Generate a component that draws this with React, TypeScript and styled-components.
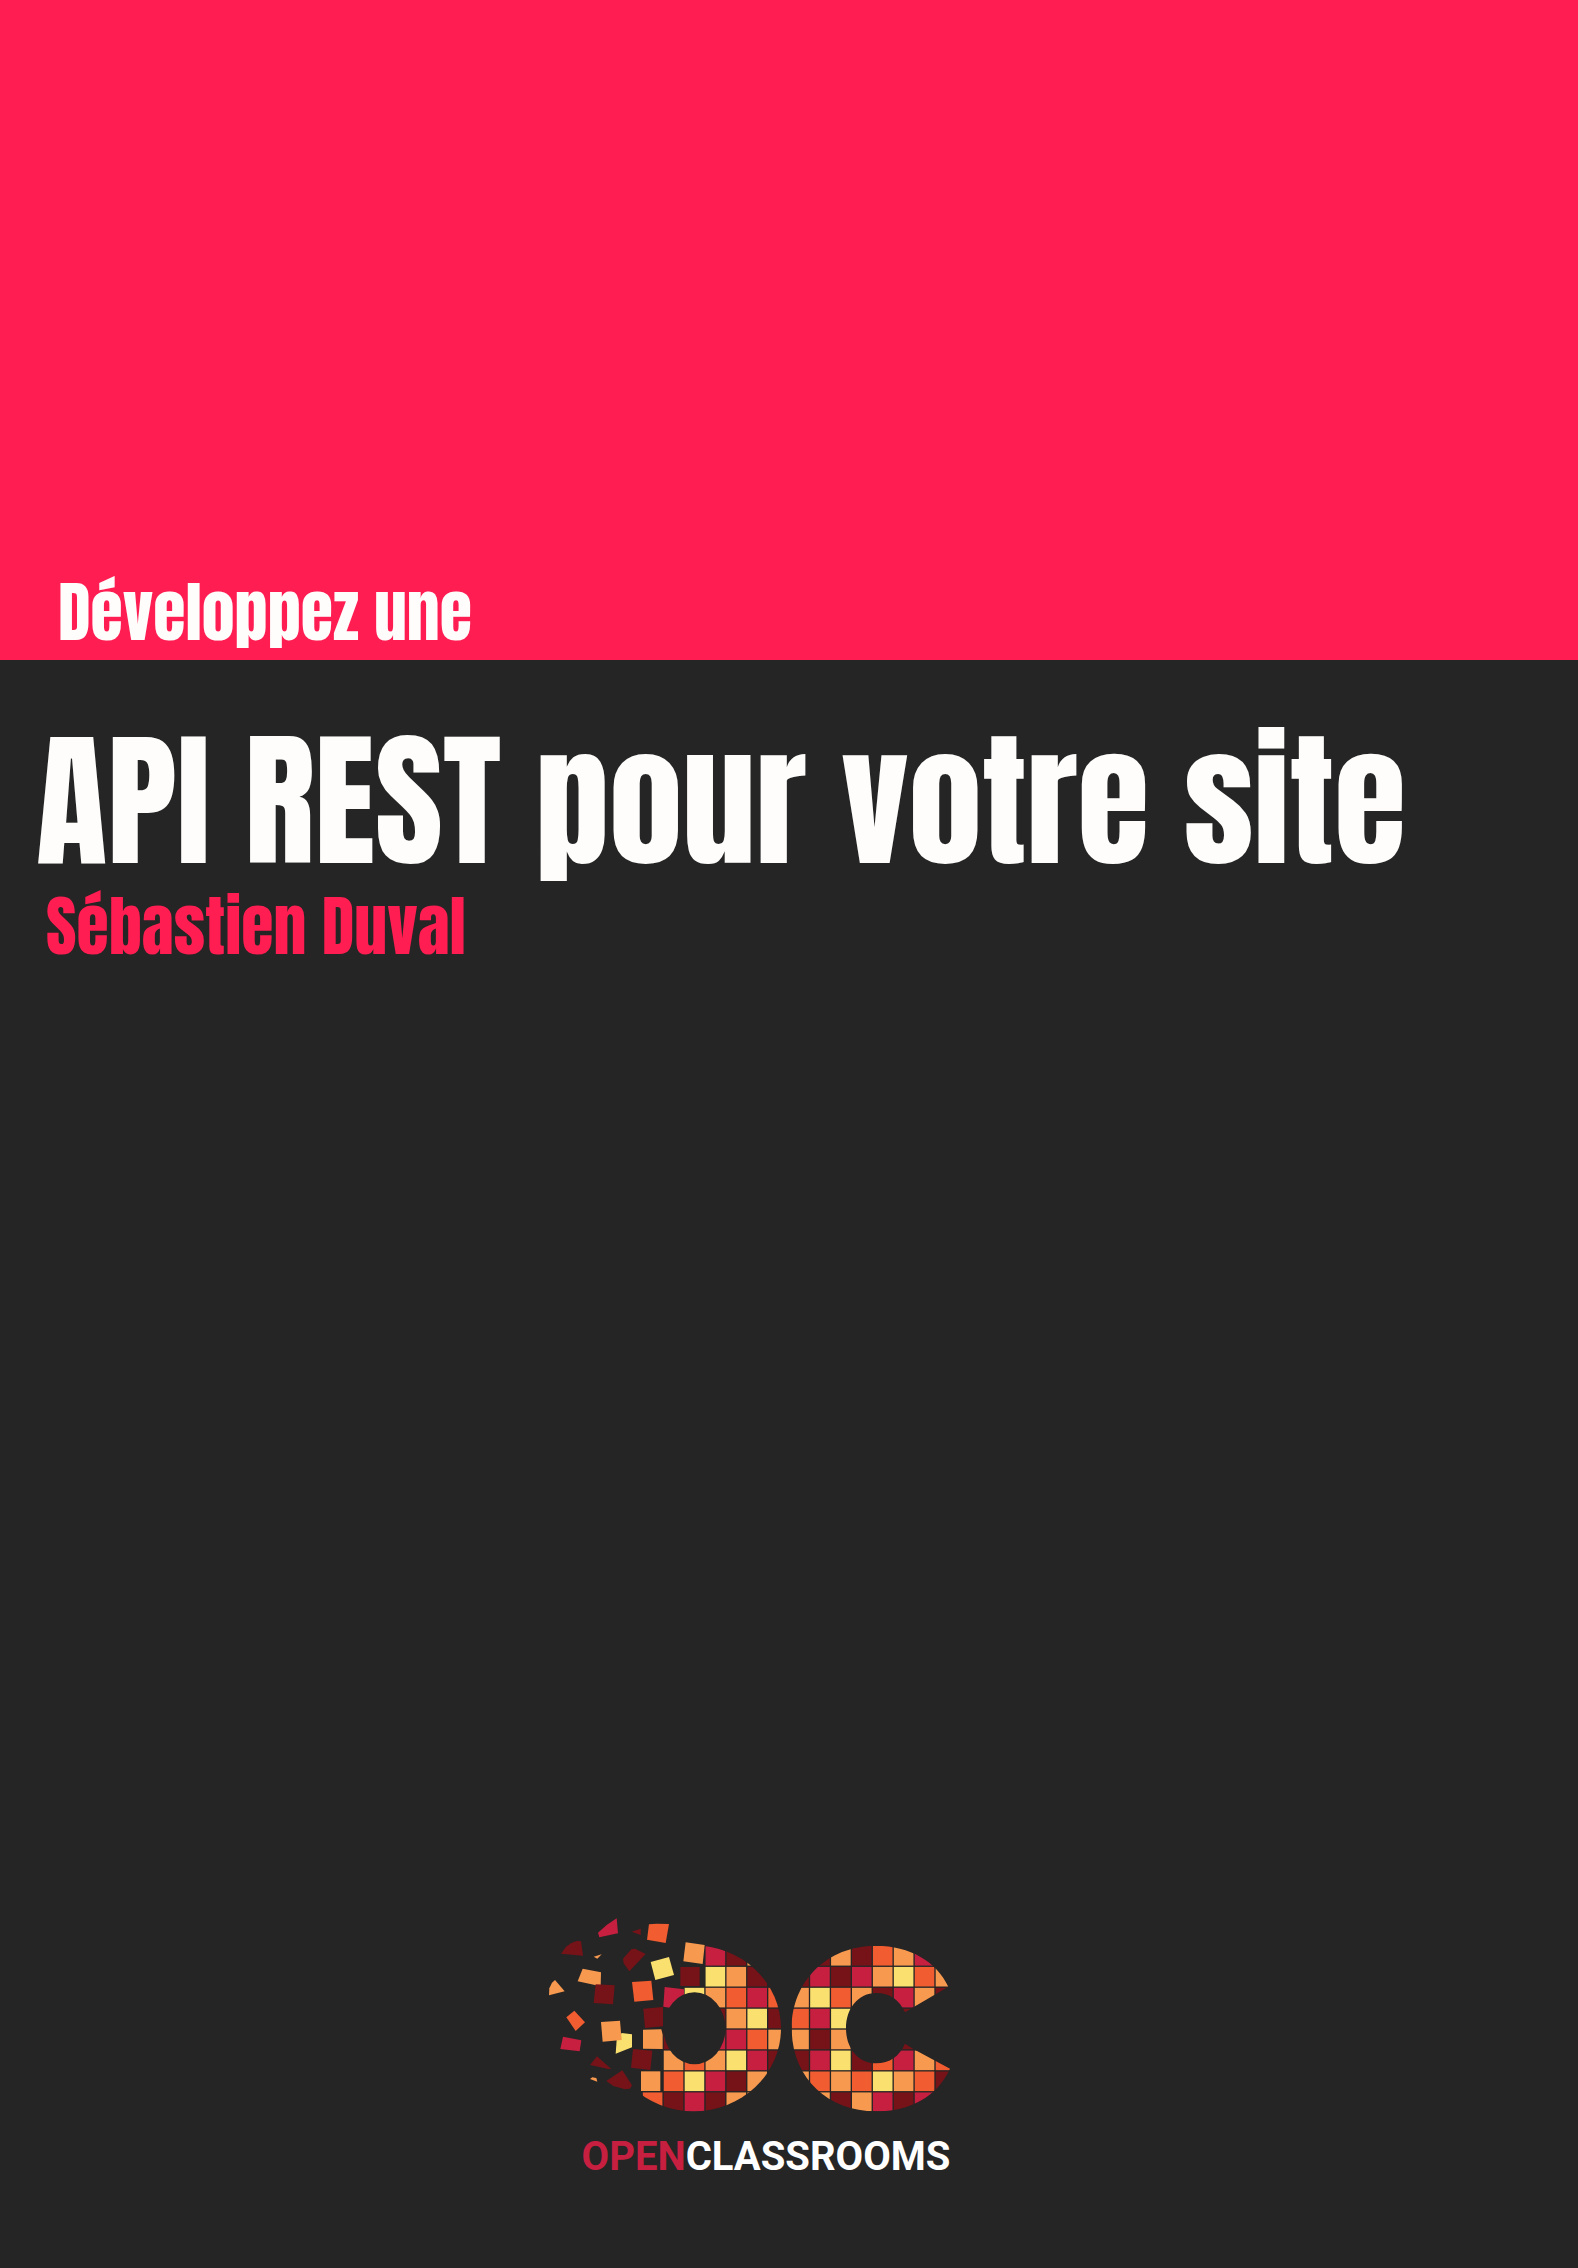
import React from "react";
import styled, { createGlobalStyle } from "styled-components";

const color = {
  pink: "#ff1d52",
  ink: "#252525",
  white: "#fefdfc",
  crimson: "#c61f40",
  maroon: "#761318",
  orange: "#f15c30",
  peach: "#f89950",
  yellow: "#fae06e",
};

const GlobalStyle = createGlobalStyle`
  *, *::before, *::after { box-sizing: border-box; }
  body { margin: 0; background: ${color.ink}; }
`;

const Cover = styled.main`
  display: flex;
  flex-direction: column;
  min-height: 100vh;
  background: ${color.ink};
  font-family: Impact, Anton, "Roboto Condensed", sans-serif;
  font-weight: 400;
`;

const Banner = styled.header`
  display: flex;
  align-items: flex-end;
  min-height: 660px;
  padding: 0 58px;
  background: ${color.pink};
`;

const Kicker = styled.p`
  margin: 0;
  font-size: 66px;
  line-height: 96px;
  color: ${color.white};
`;

const Heading = styled.section`
  flex: 1;
  padding: 46px 36px;
`;

const Title = styled.h1`
  margin: 0;
  font-size: 147px;
  font-weight: 400;
  line-height: 190px;
  color: ${color.white};
`;

const Author = styled.p`
  margin: 0;
  padding-left: 10px;
  font-size: 66px;
  line-height: 60px;
  color: ${color.pink};
`;

const Publisher = styled.footer`
  display: flex;
  flex-direction: column;
  align-items: center;
  gap: 20px;
  padding: 0 78px 88px 0;
`;

const Mark = styled.svg`
  display: block;
  width: 404px;
  height: 198px;
`;

const Wordmark = styled.p`
  margin: 0;
  padding-left: 32px;
  font-family: Roboto, sans-serif;
  font-size: 40px;
  font-weight: 700;
  line-height: 46px;
  color: #ffffff;
`;

const Accent = styled.span`
  color: ${color.crimson};
`;

const tone: Record<string, string> = {
  c: color.crimson,
  m: color.maroon,
  o: color.orange,
  p: color.peach,
  y: color.yellow,
};

/* Mosaic tiles, one letter per tile; a dot leaves the tile out. */
const letterO = [
  "...cmp.",
  "...ypm.",
  "..ypoco",
  "...mpym",
  ".m.ccop",
  ".popycm",
  ".oycmp.",
  "omcmpp.",
];
const letterC = [
  ".mpmopc.",
  "mcmcpyop",
  "pyopmcpm",
  "ocyp.m..",
  "pmpm.m..",
  "mcymocpo",
  "popoypom",
  ".pmpcmc.",
];

const pitch = 62.75;
const left = 336.5;
const top = 136;

function Tiles({ rows, offset }: { rows: string[]; offset: number }) {
  return (
    <>
      {rows.flatMap((row, r) =>
        [...row].map((key, c) =>
          key === "." ? null : (
            <rect
              key={`${r}-${c}`}
              x={left + (c + offset) * pitch + 2}
              y={top + r * pitch + 2}
              width={pitch - 4}
              height={pitch - 4}
              fill={tone[key]}
            />
          )
        )
      )}
    </>
  );
}

const shards: [string, string][] = [
  ["c", "204,98 230,75 260,55 264,100 208,112"],
  ["m", "93,161 108,140 124,129 140,123 153,124 159,167"],
  ["p", "191,170 215,163 202,176"],
  ["m", "305,95 332,86 332,105"],
  ["o", "357,73 380,71 417,72 407,129 351,119"],
  ["m", "279,176 304,148 315,146 347,162 298,214 281,190"],
  ["y", "362,186 417,171 432,225 376,240"],
  ["p", "467,127 524,135 518,192 460,184"],
  ["p", "158,206 213,217 212,259 143,244"],
  ["p", "57,286 58,265 66,248 75,240 104,274"],
  ["m", "197,253 254,256 249,313 191,309"],
  ["o", "306,246 364,242 370,300 313,305"],
  ["m", "451,201 509,201 509,258 451,258"],
  ["c", "404,261 462,268 462,330 400,320"],
  ["o", "109,352 133,332 165,367 137,393"],
  ["c", "99,410 154,421 149,454 91,447"],
  ["y", "275,399 306,403 306,442 257,461 260,420"],
  ["p", "213,366 270,362 275,420 218,425"],
  ["m", "340,326 399,321 399,379 345,384"],
  ["p", "339,389 394,388 398,404 398,447 339,446"],
  ["m", "309,447 367,452 361,510 303,503"],
  ["m", "180,495 201,469 244,507 235,507"],
  ["m", "229,543 277,511 306,556 300,566 285,568 250,558"],
  ["p", "180,537 187,532 199,534 202,545"],
  ["p", "333,514 391,514 391,573 333,573"],
];

function Logo() {
  return (
    <Mark viewBox="54 48 1212 594" role="img" aria-label="OC">
      <defs>
        <clipPath id="shape-o">
          <ellipse cx="491" cy="385" rx="262" ry="249" />
        </clipPath>
        <clipPath id="shape-c">
          <path d="M1255 260 C1220 185 1140 137 1038 137 C890 137 785 245 785 385 C785 530 890 634 1038 634 C1140 634 1222 590 1260 506 L1150 447 L1125 431 C1108 468 1080 490 1038 490 C985 490 948 445 948 385 C948 325 985 279 1038 279 C1080 279 1108 300 1125 337 L1150 322 Z" />
        </clipPath>
      </defs>
      <g clipPath="url(#shape-o)">
        <Tiles rows={letterO} offset={0} />
      </g>
      {shards.map(([key, points]) => (
        <polygon key={points} points={points} fill={tone[key]} />
      ))}
      <ellipse cx="493.5" cy="385" rx="93" ry="108" fill={color.ink} />
      <g clipPath="url(#shape-c)">
        <Tiles rows={letterC} offset={7} />
      </g>
    </Mark>
  );
}

export default function App() {
  return (
    <>
      <GlobalStyle />
      <Cover>
        <Banner>
          <Kicker>Développez une</Kicker>
        </Banner>
        <Heading>
          <Title>API REST pour votre site</Title>
          <Author>Sébastien Duval</Author>
        </Heading>
        <Publisher>
          <Logo />
          <Wordmark>
            <Accent>OPEN</Accent>CLASSROOMS
          </Wordmark>
        </Publisher>
      </Cover>
    </>
  );
}
